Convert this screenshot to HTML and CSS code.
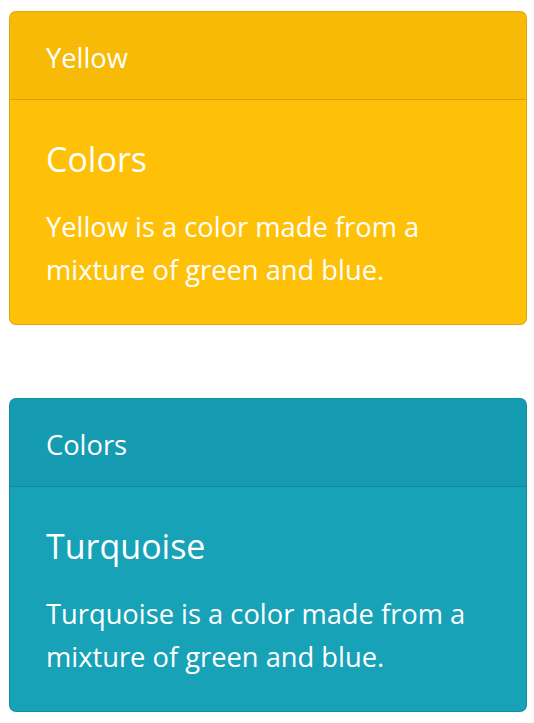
FILE: index.html
```html
<!DOCTYPE html>
<html>
<head>
<meta charset="utf-8">
<link rel="stylesheet" href="styles.css">
</head>
<body>
<div class="card card-warning">
  <div class="card-header">Yellow</div>
  <div class="card-body">
    <h5 class="card-title">Colors</h5>
    <p class="card-text">Yellow is a color made from a mixture of green and blue.</p>
  </div>
</div>
<div class="card card-info">
  <div class="card-header">Colors</div>
  <div class="card-body">
    <h5 class="card-title">Turquoise</h5>
    <p class="card-text">Turquoise is a color made from a mixture of green and blue.</p>
  </div>
</div>
</body>
</html>
```
FILE: styles.css
```css
html, body {
  margin: 0;
  padding: 0;
  background: #fff;
}
body {
  padding: 11px 7px 0 9px;
  font-family: "Open Sans", "Noto Sans", sans-serif;
  font-size: 27.3px;
  line-height: 43px;
  color: #fff;
}
.card {
  border: 1px solid rgba(0, 0, 0, 0.125);
  border-radius: 7px;
  overflow: hidden;
  margin-bottom: 73px;
}
.card:last-child {
  margin-bottom: 0;
}
.card-warning { background: #ffc107; }
.card-info { background: #17a2b8; }
.card-header {
  background: rgba(0, 0, 0, 0.03);
  border-bottom: 1px solid rgba(0, 0, 0, 0.125);
  padding: 24px 36px 20px;
}
.card-body {
  padding: 38px 36px 33px;
}
.card-title {
  margin: 0 0 24px;
  font-size: 34px;
  font-weight: 400;
  line-height: 43px;
}
.card-text {
  margin: 0;
}
```
